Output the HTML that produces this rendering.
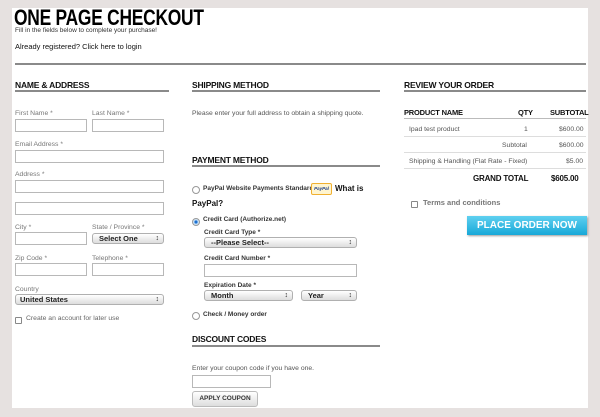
<!DOCTYPE html>
<html><head><meta charset="utf-8"><style>
*{margin:0;padding:0;box-sizing:border-box}
body{width:600px;height:417px;background:#e6e1e0;position:relative;overflow:hidden;font-family:"Liberation Sans",sans-serif;color:#222}
#p{position:absolute;left:12px;top:8px;width:576px;height:400px;background:#fff}
.a{position:absolute;white-space:nowrap}
.h{font-weight:bold;font-size:8.5px;letter-spacing:-0.2px;color:#111}
.u{position:absolute;height:2px;background:#8a8a8a}
.l{font-size:6.8px;color:#777}
.in{position:absolute;height:13px;border:1px solid #b8b8b8;background:#fff}
.sel{position:absolute;height:11px;border:1px solid #b0b0b0;border-radius:3px;background:linear-gradient(#fff,#ddd);font-size:7.5px;font-weight:bold;padding-left:6px;line-height:9px;color:#222}
.sel:after{content:"\2195";position:absolute;right:4px;top:0;font-size:7px}
.t{font-size:6.8px;color:#555}
.b{font-size:6.5px;font-weight:bold;color:#333}
.r{position:absolute;width:8px;height:8px;border:1px solid #999;border-radius:50%;background:#fff}
.cb{position:absolute;width:7px;height:7px;border:1px solid #888;border-radius:1px}
.hl{position:absolute;height:1px;background:#ddd}
</style></head><body>
<div id="p"></div>
<div class="a" style="left:14px;top:5px;font-size:22px;font-weight:bold;letter-spacing:-0.3px;transform:scaleX(0.79);transform-origin:left;color:#000">ONE PAGE CHECKOUT</div>
<div class="a" style="left:15px;top:27px;font-size:6.5px;color:#333">Fill in the fields below to complete your purchase!</div>
<div class="a" style="left:15px;top:42px;font-size:7.5px;color:#111">Already registered? Click here to login</div>
<div class="u" style="left:15px;top:63px;width:571px"></div>

<div class="a h" style="left:15px;top:80px">NAME &amp; ADDRESS</div><div class="u" style="left:15px;top:90px;width:154px"></div>
<div class="a h" style="left:192px;top:80px">SHIPPING METHOD</div><div class="u" style="left:192px;top:90px;width:188px"></div>
<div class="a h" style="left:404px;top:80px">REVIEW YOUR ORDER</div><div class="u" style="left:404px;top:90px;width:182px"></div>

<div class="a l" style="left:15px;top:110px">First Name *</div><div class="a l" style="left:92px;top:110px">Last Name *</div>
<div class="in" style="left:15px;top:119px;width:72px"></div><div class="in" style="left:92px;top:119px;width:72px"></div>
<div class="a l" style="left:15px;top:141px">Email Address *</div><div class="in" style="left:15px;top:150px;width:149px"></div>
<div class="a l" style="left:15px;top:171px">Address *</div><div class="in" style="left:15px;top:180px;width:149px"></div>
<div class="in" style="left:15px;top:202px;width:149px"></div>
<div class="a l" style="left:15px;top:224px">City *</div><div class="a l" style="left:92px;top:224px">State / Province *</div>
<div class="in" style="left:15px;top:232px;width:72px"></div><div class="sel" style="left:92px;top:233px;width:72px;padding-left:6px">Select One</div>
<div class="a l" style="left:15px;top:255px">Zip Code *</div><div class="a l" style="left:92px;top:255px">Telephone *</div>
<div class="in" style="left:15px;top:263px;width:72px"></div><div class="in" style="left:92px;top:263px;width:72px"></div>
<div class="a l" style="left:15px;top:286px">Country</div><div class="sel" style="left:15px;top:294px;width:149px;padding-left:4px">United States</div>
<div class="cb" style="left:15px;top:317px"></div><div class="a l" style="left:26px;top:315px;color:#666">Create an account for later use</div>

<div class="a t" style="left:192px;top:110px">Please enter your full address to obtain a shipping quote.</div>
<div class="a h" style="left:192px;top:155px">PAYMENT METHOD</div><div class="u" style="left:192px;top:165px;width:188px"></div>
<div class="r" style="left:192px;top:186px"></div>
<div class="a b" style="left:203px;top:185px">PayPal Website Payments Standard</div>
<div class="a" style="left:311px;top:183px;width:21px;height:12px;border:1px solid #f0b030;border-radius:2px;background:#fff5d0;font-size:4.5px;font-style:italic;font-weight:bold;color:#1a3d8a;text-align:center;line-height:10px">PayPal</div>
<div class="a" style="left:335px;top:184px;font-size:8px;font-weight:bold;color:#111">What is</div>
<div class="a" style="left:192px;top:199px;font-size:8px;font-weight:bold;color:#111">PayPal?</div>
<div class="r" style="left:192px;top:218px;background:radial-gradient(#1c6fd0 30%,#9cc8f0 40%,#fff 80%)"></div>
<div class="a b" style="left:203px;top:216px">Credit Card (Authorize.net)</div>
<div class="a b" style="left:204px;top:229px">Credit Card Type *</div>
<div class="sel" style="left:204px;top:237px;width:153px">--Please Select--</div>
<div class="a b" style="left:204px;top:255px">Credit Card Number *</div>
<div class="in" style="left:204px;top:264px;width:153px"></div>
<div class="a b" style="left:204px;top:282px">Expiration Date *</div>
<div class="sel" style="left:204px;top:290px;width:89px">Month</div>
<div class="sel" style="left:301px;top:290px;width:56px">Year</div>
<div class="r" style="left:192px;top:312px"></div>
<div class="a b" style="left:203px;top:311px">Check / Money order</div>
<div class="a h" style="left:192px;top:334px">DISCOUNT CODES</div><div class="u" style="left:192px;top:345px;width:188px"></div>
<div class="a t" style="left:192px;top:365px">Enter your coupon code if you have one.</div>
<div class="in" style="left:192px;top:375px;width:79px"></div>
<div class="a" style="left:192px;top:391px;width:66px;height:16px;border:1px solid #bbb;border-radius:3px;background:linear-gradient(#fff,#ddd);font-size:6.5px;font-weight:bold;text-align:center;line-height:14px;color:#333">APPLY COUPON</div>

<div class="a h" style="left:404px;top:108px;font-size:7.5px">PRODUCT NAME</div>
<div class="a h" style="left:518px;top:108px;font-size:7.5px">QTY</div>
<div class="a h" style="left:550px;top:108px;font-size:7.5px">SUBTOTAL</div>
<div class="hl" style="left:404px;top:118px;width:182px;background:#bbb"></div>
<div class="a t" style="left:409px;top:126px">Ipad test product</div><div class="a t" style="left:524px;top:126px">1</div><div class="a t" style="left:559px;top:126px">$600.00</div>
<div class="hl" style="left:404px;top:136px;width:182px"></div>
<div class="a t" style="left:502px;top:142px">Subtotal</div><div class="a t" style="left:559px;top:142px">$600.00</div>
<div class="hl" style="left:404px;top:152px;width:182px"></div>
<div class="a t" style="left:409px;top:158px">Shipping &amp; Handling (Flat Rate - Fixed)</div><div class="a t" style="left:566px;top:158px">$5.00</div>
<div class="hl" style="left:404px;top:168px;width:182px"></div>
<div class="a h" style="left:473px;top:174px;font-size:8px">GRAND TOTAL</div><div class="a h" style="left:551px;top:174px;font-size:8px">$605.00</div>
<div class="cb" style="left:411px;top:201px"></div><div class="a" style="left:423px;top:198px;font-size:7.5px;font-weight:bold;color:#777">Terms and conditions</div>
<div class="a" style="left:467px;top:216px;width:120px;height:19px;background:linear-gradient(#5fd0f0,#17a8d8);box-shadow:1px 1px 2px #999;color:#fff;font-weight:bold;font-size:10px;text-align:center;line-height:19px">PLACE ORDER NOW</div>
</body></html>
